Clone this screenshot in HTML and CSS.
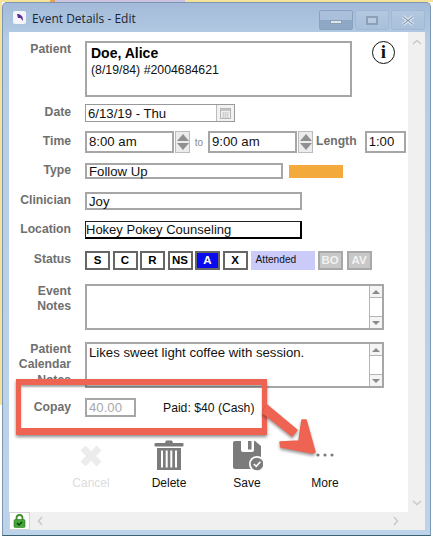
FILE: index.html
```html
<!DOCTYPE html>
<html lang="en">

<head>
    <meta charset="UTF-8">
    <meta name="viewport" content="width=device-width, initial-scale=1.0">
    <title>Event Details - Edit</title>
    <link rel="stylesheet" href="styles.css">
</head>

<body>
    <div class="window">
        <div class="titlebar">
            <svg class="app-icon" width="15" height="15" viewBox="0 0 15 15">
                <rect x="1" y="1" width="13" height="13" rx="2" fill="#f4f4fb"/>
                <path d="M5 4 C9 4 11 6 11 11 L8.5 8 L6 8 Z" fill="#5b2d9b"/>
            </svg>
            <span class="title">Event Details - Edit</span>
            <div class="controls">
                <div class="ctl ctl-min"><span class="glyph-min"></span></div>
                <div class="ctl"><span class="glyph-max"></span></div>
                <div class="ctl">
                    <svg width="14" height="11" viewBox="0 0 14 11">
                        <path d="M2 1.5 L12 9.5 M12 1.5 L2 9.5" stroke="#e8eef5" stroke-width="3.2" fill="none"/>
                        <path d="M2 1.5 L12 9.5 M12 1.5 L2 9.5" stroke="#8fa2b6" stroke-width="1.4" fill="none"/>
                    </svg>
                </div>
            </div>
        </div>

        <div class="middle">
            <div class="panel">
                <div class="row row-patient">
                    <div class="label">Patient</div>
                    <div class="box patient-box">
                        <div class="patient-name">Doe, Alice</div>
                        <div class="patient-info">(8/19/84) #2004684621</div>
                    </div>
                    <div class="info-icon">i</div>
                </div>

                <div class="row row-date">
                    <div class="label">Date</div>
                    <div class="box date-box">
                        <span class="field-text">6/13/19 - Thu</span>
                        <div class="cal-btn">
                            <svg width="11" height="11" viewBox="0 0 11 11">
                                <rect x="0.5" y="0.5" width="10" height="10" fill="#f0f0f0" stroke="#b5b5b5"/>
                                <rect x="1" y="1" width="9" height="2" fill="#c4c4c4"/>
                                <path d="M2 5 H9 M2 7 H9 M2 9 H9 M3.5 4 V10 M5.5 4 V10 M7.5 4 V10" stroke="#c8c8c8" stroke-width="0.7"/>
                            </svg>
                        </div>
                    </div>
                </div>

                <div class="row row-time">
                    <div class="label">Time</div>
                    <div class="box time-box"><span class="field-text">8:00 am</span></div>
                    <div class="spinner"><span class="tri-up"></span><span class="tri-down"></span></div>
                    <span class="to">to</span>
                    <div class="box time-box"><span class="field-text">9:00 am</span></div>
                    <div class="spinner"><span class="tri-up"></span><span class="tri-down"></span></div>
                    <div class="label length-label">Length</div>
                    <div class="box length-box"><span class="field-text">1:00</span></div>
                </div>

                <div class="row row-type">
                    <div class="label">Type</div>
                    <div class="box type-box"><span class="field-text">Follow Up</span></div>
                    <div class="type-color"></div>
                </div>

                <div class="row row-clinician">
                    <div class="label">Clinician</div>
                    <div class="box wide-box"><span class="field-text">Joy</span></div>
                </div>

                <div class="row row-location">
                    <div class="label">Location</div>
                    <div class="box wide-box focused"><span class="field-text">Hokey Pokey Counseling</span></div>
                </div>

                <div class="row row-status">
                    <div class="label">Status</div>
                    <div class="status-list">
                        <div class="status-btn">S</div>
                        <div class="status-btn">C</div>
                        <div class="status-btn">R</div>
                        <div class="status-btn">NS</div>
                        <div class="status-btn active">A</div>
                        <div class="status-btn">X</div>
                    </div>
                    <div class="status-name">Attended</div>
                    <div class="status-btn off">BO</div>
                    <div class="status-btn off">AV</div>
                </div>

                <div class="row row-notes">
                    <div class="label">Event<br>Notes</div>
                    <div class="box notes-box">
                        <div class="notes-text"></div>
                        <div class="notes-scroll">
                            <div class="notes-arrow"><span class="mini-up"></span></div>
                            <div class="notes-track"></div>
                            <div class="notes-arrow"><span class="mini-down"></span></div>
                        </div>
                    </div>
                </div>

                <div class="row row-pnotes">
                    <div class="label">Patient<br>Calendar<br>Notes</div>
                    <div class="box notes-box">
                        <div class="notes-text">Likes sweet light coffee with session.</div>
                        <div class="notes-scroll">
                            <div class="notes-arrow"><span class="mini-up"></span></div>
                            <div class="notes-track"></div>
                            <div class="notes-arrow"><span class="mini-down"></span></div>
                        </div>
                    </div>
                </div>

                <div class="row row-copay">
                    <div class="label">Copay</div>
                    <div class="box copay-box"><span class="field-text">40.00</span></div>
                    <div class="paid">Paid: $40 (Cash)</div>
                </div>

                <div class="toolbar">
                    <div class="tool disabled">
                        <svg width="32" height="32" viewBox="0 0 32 32">
                            <path d="M8 8 L24 24 M24 8 L8 24" stroke="#ececec" stroke-width="7" fill="none"/>
                        </svg>
                        <span>Cancel</span>
                    </div>
                    <div class="tool">
                        <svg width="32" height="32" viewBox="0 0 32 32">
                            <path d="M12 3 L13 0.5 H19 L20 3 Z" fill="#7b7b7b"/>
                            <rect x="1.5" y="3" width="29" height="3.4" rx="1" fill="#7b7b7b"/>
                            <path d="M4 8 H28 V30 H4 Z" fill="#7b7b7b"/>
                            <path d="M8 10.5 V27.5 M12.7 10.5 V27.5 M17.3 10.5 V27.5 M22 10.5 V27.5" stroke="#fff" stroke-width="2" transform="translate(1 0)"/>
                        </svg>
                        <span>Delete</span>
                    </div>
                    <div class="tool">
                        <svg width="32" height="32" viewBox="0 0 32 32">
                            <path d="M4 1 H24 L30 6 V29 H4 Q2 29 2 27 V3 Q2 1 4 1 Z" fill="#7b7b7b"/>
                            <path d="M10 1 H23 V10 Q23 12 21 12 H12 Q10 12 10 10 Z" fill="#fff"/>
                            <rect x="17" y="1" width="3.5" height="8.5" fill="#7b7b7b"/>
                            <circle cx="26" cy="24" r="8" fill="#fff"/>
                            <circle cx="26" cy="24" r="6.3" fill="#7b7b7b"/>
                            <path d="M22.8 24 L25.2 26.4 L29.4 21.8" stroke="#fff" stroke-width="1.6" fill="none"/>
                        </svg>
                        <span>Save</span>
                    </div>
                    <div class="tool">
                        <svg width="32" height="32" viewBox="0 0 32 32">
                            <circle cx="9" cy="15" r="1.6" fill="#7b7b7b"/>
                            <circle cx="16" cy="15" r="1.6" fill="#7b7b7b"/>
                            <circle cx="23" cy="15" r="1.6" fill="#7b7b7b"/>
                        </svg>
                        <span>More</span>
                    </div>
                </div>
            </div>
            <div class="vscroll">
                <svg width="10" height="6" viewBox="0 0 10 6"><path d="M1 5 L5 1.5 L9 5" stroke="#c9c9c9" stroke-width="1.5" fill="none"/></svg>
                <svg width="10" height="6" viewBox="0 0 10 6"><path d="M1 1 L5 4.5 L9 1" stroke="#c9c9c9" stroke-width="1.5" fill="none"/></svg>
            </div>
        </div>

        <div class="bottom">
            <div class="lock-tab">
                <svg width="13" height="14" viewBox="0 0 13 14">
                    <path d="M3.5 6 V4 Q3.5 1 6.5 1 Q9.5 1 9.5 4 V6" stroke="#3f8f2f" stroke-width="1.8" fill="none"/>
                    <rect x="1" y="5.5" width="11" height="8" rx="1.2" fill="#45a536" stroke="#2d7a24" stroke-width="0.6"/>
                    <path d="M4 9 L6 11 L9 8" stroke="#0d3d0d" stroke-width="1.3" fill="none"/>
                </svg>
            </div>
            <div class="hscroll">
                <svg width="6" height="10" viewBox="0 0 6 10"><path d="M5 1 L1.5 5 L5 9" stroke="#c9c9c9" stroke-width="1.5" fill="none"/></svg>
                <svg width="6" height="10" viewBox="0 0 6 10"><path d="M1 1 L4.5 5 L1 9" stroke="#c9c9c9" stroke-width="1.5" fill="none"/></svg>
            </div>
        </div>
    </div>

    <!-- red callout drawn over the screenshot -->
    <div class="callout"></div>
    <svg class="callout-arrow" width="70" height="62" viewBox="260 400 70 62">
        <path d="M267 405 L297 430 L292 436 L263 413 Z" fill="#ee6352" stroke="#ee6352" stroke-width="1.5" stroke-linejoin="round"/>
        <path d="M302 420 L306 420 L315 452 L312 453 L281 447 L280 442 L299 441 Z" fill="#ee6352" stroke="#ee6352" stroke-width="1.5" stroke-linejoin="round"/>
    </svg>
</body>

</html>
```

FILE: styles.css
```css
body {
    margin: 0;
    width: 433px;
    height: 537px;
    overflow: hidden;
    position: relative;
    font-family: "Liberation Sans", Arial, sans-serif;
    background-color: #fff;
    background-image:
        linear-gradient(90deg, #f5e39c 0 50px, #e9a24f 50px 55px, #cbc3e2 55px 185px, #f5e39c 185px),
        linear-gradient(#f5e39c 0 405px, #fff 405px);
    background-size: 100% 2px, 2px 100%;
    background-repeat: no-repeat;
}

.window {
    position: absolute;
    left: 2px;
    top: 2px;
    width: 429px;
    height: 534px;
    box-sizing: border-box;
    display: flex;
    flex-direction: column;
    background: linear-gradient(#a3bbd8, #b6cde6 40px, #bcd3ea);
    border: 1px solid #7d97b3;
    border-bottom-color: #3d6273;
    border-radius: 5px 5px 0 0;
    padding: 0 5px 5px 6px;
}

/* title bar */
.titlebar {
    height: 29px;
    display: flex;
    align-items: center;
    flex-shrink: 0;
}
.app-icon {
    margin: 0 5px 0 3px;
}
.title {
    font-family: "Open Sans", sans-serif;
    font-size: 12px;
    color: #1c2530;
    padding-top: 1px;
}
.controls {
    margin-left: auto;
    margin-top: 5px;
    margin-right: 0;
    display: flex;
    gap: 2px;
}
.ctl {
    width: 34px;
    height: 20px;
    display: flex;
    align-items: center;
    justify-content: center;
    background: linear-gradient(#b3c8e0, #a9c0db);
    border: 1px solid #a3b9d3;
    box-sizing: border-box;
    border-radius: 2px;
}
.ctl-min {
    background: linear-gradient(#a9bfda 50%, #8ea7c4 50%);
    border-color: #8aa2bf;
}
.glyph-min {
    width: 12px;
    height: 4px;
    margin-top: 4px;
    background-color: #dfe5ec;
    border: 1px solid #8a9db2;
    box-sizing: border-box;
}
.glyph-max {
    width: 12px;
    height: 9px;
    border: 2px solid #8ea0b5;
    background-color: #b9cbe0;
    box-sizing: border-box;
}

.middle {
    flex: 1;
    display: flex;
    min-height: 0;
}
.panel {
    width: 399px;
    background-color: #fff;
    padding-top: 9px;
    box-sizing: border-box;
}
.vscroll {
    flex: 1;
    background-color: #f0f0f0;
    display: flex;
    flex-direction: column;
    align-items: center;
    justify-content: space-between;
    padding: 7px 0 6px;
}

.bottom {
    height: 18px;
    flex-shrink: 0;
    display: flex;
    background-color: #f0f0f0;
}
.lock-tab {
    width: 21px;
    background-color: #fff;
    border: 1px solid #d4d4d4;
    border-top: 1px solid #d4d4d4;
    box-sizing: border-box;
    display: flex;
    align-items: center;
    justify-content: center;
}
.hscroll {
    flex: 1;
    display: flex;
    align-items: center;
    justify-content: space-between;
    padding: 0 26px 0 7px;
}

/* form rows */
.row {
    display: flex;
    align-items: center;
}
.label {
    width: 62px;
    margin-right: 14px;
    flex-shrink: 0;
    text-align: right;
    font-size: 12.2px;
    font-weight: bold;
    line-height: 15.4px;
    color: #6f6f6f;
}
.box {
    box-sizing: border-box;
    border: 2px solid #a6a6a6;
    background-color: #fff;
    font-size: 13.2px;
    color: #111;
}
.field-text {
    padding-left: 2px;
}

.row-patient {
    height: 56px;
    align-items: flex-start;
}
.row-patient .label {
    padding-top: 1px;
}
.patient-box {
    width: 267px;
    height: 56px;
    padding: 2px 4px;
}
.patient-name {
    font-size: 14px;
    font-weight: bold;
    line-height: 16px;
    color: #000;
}
.patient-info {
    font-size: 12.3px;
    line-height: 18px;
}
.info-icon {
    width: 23px;
    height: 23px;
    box-sizing: border-box;
    margin-left: 20px;
    border: 1.5px solid #111;
    border-radius: 50%;
    text-align: center;
    font-family: "Liberation Serif", serif;
    font-size: 19px;
    font-weight: bold;
    line-height: 20px;
    color: #111;
}

.row-date {
    height: 18px;
    margin-top: 7px;
}
.date-box {
    width: 150px;
    height: 18px;
    display: flex;
    align-items: center;
    justify-content: space-between;
    border-width: 1px;
    border-color: #999;
}
.cal-btn {
    width: 17px;
    height: 16px;
    display: flex;
    align-items: center;
    justify-content: center;
    background-color: #f2f2f2;
    border-left: 1px solid #bbb;
}

.row-time {
    height: 22px;
    margin-top: 9px;
}
.time-box {
    width: 89px;
    height: 22px;
    line-height: 18px;
}
.spinner {
    width: 15px;
    height: 22px;
    margin-left: 1px;
    box-sizing: border-box;
    border: 1px solid #bcbcbc;
    background-color: #ececec;
    display: flex;
    flex-direction: column;
    align-items: center;
    justify-content: center;
    gap: 2px;
}
.tri-up {
    border-left: 6px solid transparent;
    border-right: 6px solid transparent;
    border-bottom: 7px solid #909090;
}
.tri-down {
    border-left: 6px solid transparent;
    border-right: 6px solid transparent;
    border-top: 7px solid #909090;
}
.to {
    width: 18px;
    text-align: center;
    font-size: 10px;
    color: #8a8a8a;
}
.length-label {
    width: auto;
    margin: 0 8px 0 3px;
}
.length-box {
    width: 41px;
    height: 22px;
    line-height: 18px;
}

.row-type {
    height: 16px;
    margin-top: 10px;
}
.type-box {
    width: 198px;
    height: 16px;
    line-height: 13px;
}
.type-color {
    width: 54px;
    height: 13px;
    margin-left: 6px;
    background-color: #f3a93c;
}

.row-clinician {
    height: 18px;
    margin-top: 13px;
}
.row-location {
    height: 18px;
    margin-top: 11px;
}
.wide-box {
    width: 217px;
    height: 18px;
    line-height: 15px;
}
.focused {
    border: 1px solid #222;
    border-right-width: 2px;
    border-bottom-width: 2px;
    border-right-color: #000;
    border-bottom-color: #000;
    font-size: 13px;
}
.focused .field-text {
    padding-left: 0;
}

.row-status {
    height: 20px;
    margin-top: 11px;
}
.status-list {
    display: flex;
    gap: 2.5px;
}
.status-btn {
    width: 25px;
    height: 19px;
    box-sizing: border-box;
    border: 2px solid #666;
    background-color: #fff;
    text-align: center;
    font-size: 11.5px;
    font-weight: bold;
    line-height: 15px;
    color: #000;
}
.status-btn.active {
    background-color: #0a0aee;
    color: #fff;
}
.status-btn.off {
    border-color: #a8a8a8;
    background-color: #c8c8c8;
    color: #f2f2f2;
    margin-right: 4px;
}
.status-name {
    width: 64px;
    height: 19px;
    margin: 1px 3px 0 3px;
    padding-left: 5px;
    box-sizing: border-box;
    background-color: #cbcbfa;
    font-size: 10.2px;
    line-height: 18px;
    color: #111;
}

.row-notes {
    height: 46px;
    margin-top: 14px;
    align-items: flex-start;
}
.row-pnotes {
    height: 46px;
    margin-top: 12px;
    align-items: flex-start;
}
.notes-box {
    width: 299px;
    height: 46px;
    display: flex;
}
.notes-text {
    flex: 1;
    padding: 1px 2px;
    line-height: 15px;
}
.notes-scroll {
    width: 12px;
    display: flex;
    flex-direction: column;
    border-left: 1px solid #b5b5b5;
}
.notes-arrow {
    height: 11px;
    display: flex;
    align-items: center;
    justify-content: center;
    background-color: #f4f4f4;
}
.notes-track {
    flex: 1;
    border-top: 1px solid #b5b5b5;
    border-bottom: 1px solid #b5b5b5;
}
.mini-up {
    border-left: 4px solid transparent;
    border-right: 4px solid transparent;
    border-bottom: 4px solid #8a8a8a;
}
.mini-down {
    border-left: 4px solid transparent;
    border-right: 4px solid transparent;
    border-top: 4px solid #8a8a8a;
}

.row-copay {
    height: 19px;
    margin-top: 10px;
}
.copay-box {
    width: 51px;
    height: 19px;
    line-height: 15px;
    color: #a9a9a9;
}
.paid {
    margin-left: 27px;
    font-size: 12.2px;
    color: #111;
}

/* bottom buttons */
.toolbar {
    display: flex;
    margin: 23px 0 0 43px;
}
.tool {
    width: 78px;
    display: flex;
    flex-direction: column;
    align-items: center;
    font-size: 12px;
    color: #111;
}
.tool span {
    margin-top: 4px;
}
.tool.disabled {
    color: #dcdcdc;
}

/* annotation on top of the screenshot */
.callout {
    position: absolute;
    left: 16px;
    top: 379px;
    width: 251px;
    height: 56px;
    box-sizing: border-box;
    border: 5px solid #ee6352;
    border-top-width: 6px;
    border-bottom-width: 7px;
    box-shadow: 0 2px 3px rgba(0, 0, 0, 0.45), inset 0 2px 2px rgba(0, 0, 0, 0.35);
}
.callout-arrow {
    position: absolute;
    left: 260px;
    top: 400px;
    filter: drop-shadow(0 2px 1.5px rgba(0, 0, 0, 0.4));
}
```
